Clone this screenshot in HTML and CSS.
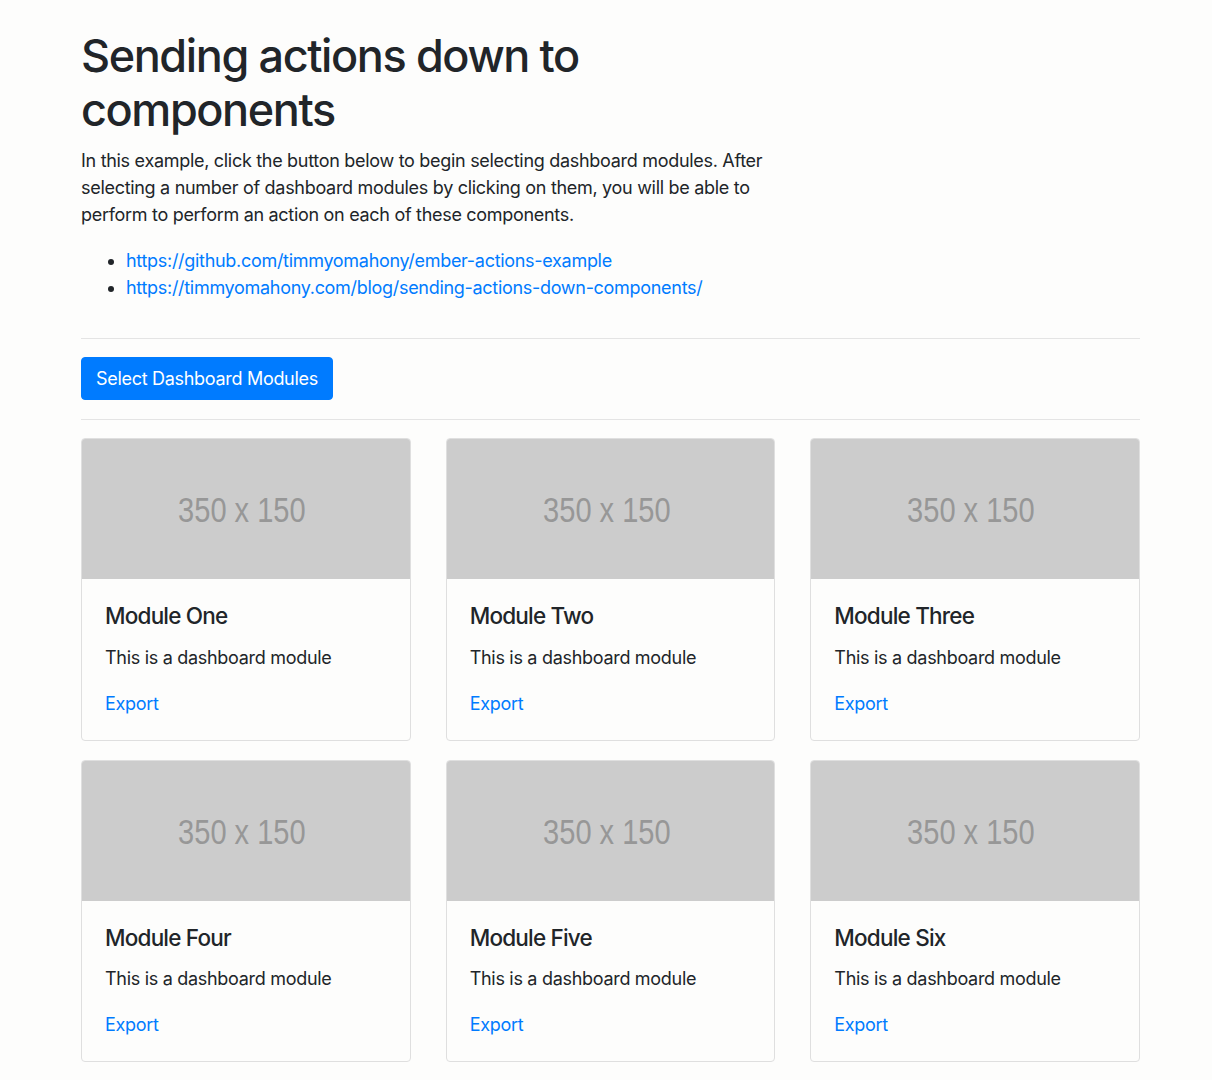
FILE: index.html
```html
<!DOCTYPE html>
<html lang="en">
<head>
<meta charset="utf-8">
<title>Sending actions down to components</title>
<link rel="stylesheet" href="styles.css">
</head>
<body>
<div class="page">
  <div class="intro">
    <h1 class="title">Sending actions down to components</h1>
    <p class="lead-text">In this example, click the button below to begin selecting dashboard modules. After selecting a number of dashboard modules by clicking on them, you will be able to perform to perform an action on each of these components.</p>
    <ul class="links">
      <li><a href="#">https://github.com/timmyomahony/ember-actions-example</a></li>
      <li><a href="#">https://timmyomahony.com/blog/sending-actions-down-components/</a></li>
    </ul>
  </div>
  <hr class="rule rule-top">
  <button class="btn-primary" type="button">Select Dashboard Modules</button>
  <hr class="rule rule-bottom">
  <div class="cards">
    <div class="card">
      <div class="card-img"><span class="ph">350 x 150</span></div>
      <div class="card-body">
        <h5 class="card-title">Module One</h5>
        <p class="card-text">This is a dashboard module</p>
        <a class="card-link" href="#">Export</a>
      </div>
    </div>
    <div class="card">
      <div class="card-img"><span class="ph">350 x 150</span></div>
      <div class="card-body">
        <h5 class="card-title">Module Two</h5>
        <p class="card-text">This is a dashboard module</p>
        <a class="card-link" href="#">Export</a>
      </div>
    </div>
    <div class="card">
      <div class="card-img"><span class="ph">350 x 150</span></div>
      <div class="card-body">
        <h5 class="card-title">Module Three</h5>
        <p class="card-text">This is a dashboard module</p>
        <a class="card-link" href="#">Export</a>
      </div>
    </div>
    <div class="card">
      <div class="card-img"><span class="ph">350 x 150</span></div>
      <div class="card-body">
        <h5 class="card-title">Module Four</h5>
        <p class="card-text">This is a dashboard module</p>
        <a class="card-link" href="#">Export</a>
      </div>
    </div>
    <div class="card">
      <div class="card-img"><span class="ph">350 x 150</span></div>
      <div class="card-body">
        <h5 class="card-title">Module Five</h5>
        <p class="card-text">This is a dashboard module</p>
        <a class="card-link" href="#">Export</a>
      </div>
    </div>
    <div class="card">
      <div class="card-img"><span class="ph">350 x 150</span></div>
      <div class="card-body">
        <h5 class="card-title">Module Six</h5>
        <p class="card-text">This is a dashboard module</p>
        <a class="card-link" href="#">Export</a>
      </div>
    </div>
  </div>
</div>
</body>
</html>
```
FILE: styles.css
```css
html, body {
  margin: 0;
  padding: 0;
  background: #fdfdfc;
}
body {
  font-family: Inter, "Noto Sans", sans-serif;
  font-size: 18px;
  line-height: 27px;
  letter-spacing: -0.3px;
  color: #212529;
}
.page {
  width: 1059px;
  padding: 29px 0 40px 81px;
}
.intro {
  width: 700px;
}
.title {
  margin: 0 0 10px;
  font-size: 45px;
  line-height: 54px;
  font-weight: 500;
  letter-spacing: -1.4px;
}
.lead-text {
  margin: 0 0 19px;
}
.links {
  margin: 0;
  padding-left: 45px;
}
.links a, .card-link {
  color: #007bff;
  text-decoration: none;
}
.rule {
  border: 0;
  border-top: 1px solid #e4e4e4;
  margin: 0;
}
.rule-top {
  margin-top: 37px;
  margin-bottom: 18px;
}
.rule-bottom {
  margin-top: 19px;
  margin-bottom: 18px;
}
.btn-primary {
  display: block;
  font: inherit;
  letter-spacing: -0.3px;
  color: #fff;
  background: #007bff;
  border: 1px solid #007bff;
  border-radius: 4px;
  padding: 7px 14px;
  height: 43px;
  line-height: 27px;
}
.cards {
  display: grid;
  grid-template-columns: repeat(3, 1fr);
  column-gap: 35px;
  row-gap: 19px;
}
.card {
  border: 1px solid #dfdfdf;
  border-radius: 4px;
  overflow: hidden;
  background: #fdfdfc;
}
.card-img {
  height: 140px;
  background: #cccccc;
  display: flex;
  align-items: center;
  justify-content: center;
}
.ph {
  font-family: "Liberation Sans", Arial, sans-serif;
  font-size: 35px;
  line-height: 40px;
  letter-spacing: 0;
  color: #979797;
  transform: scaleX(0.83);
  display: inline-block;
  margin-left: -8px;
  margin-top: 2px;
}
.card-body {
  padding: 23px 23px 23px;
}
.card-title {
  margin: 0 0 14.5px;
  font-size: 22.5px;
  line-height: 27px;
  font-weight: 500;
  letter-spacing: -0.8px;
}
.card-text {
  margin: 0 0 19px;
}
.card-link {
  display: block;
}
```
